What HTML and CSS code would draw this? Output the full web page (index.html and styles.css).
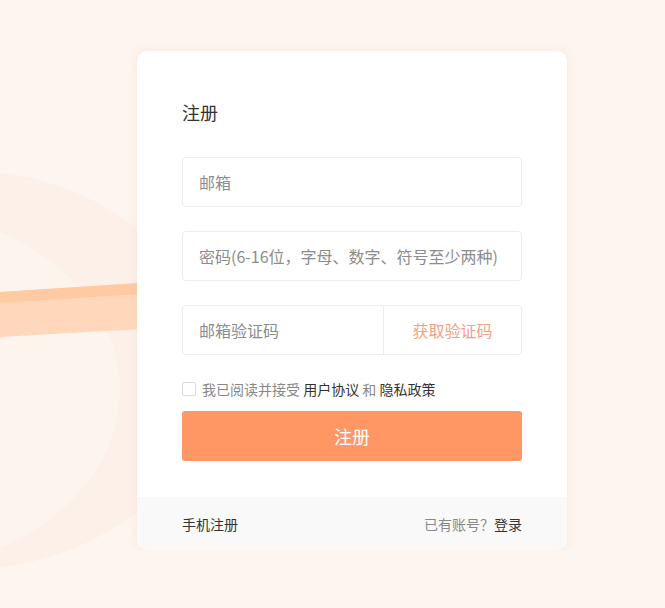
FILE: index.html
```html
<!DOCTYPE html>
<html lang="zh-CN">

<head>
    <meta charset="UTF-8">
    <title>注册</title>
    <meta name="viewport" content="width=device-width, initial-scale=1.0">
    <link rel="stylesheet" href="styles.css">
</head>

<body>

    <!-- 背景装饰 -->
    <svg class="bg-deco" width="665" height="608" viewBox="0 0 665 608">
        <ellipse cx="-40" cy="370" rx="250" ry="200" fill="#fcece1" opacity="0.5"></ellipse>
        <ellipse cx="-110" cy="390" rx="230" ry="180" fill="#fdf4ee"></ellipse>
        <polygon points="0,292 140,283 140,329 0,337" fill="#ffd7ba"></polygon>
        <polygon points="0,292 140,283 140,294 0,303" fill="#ffc9a2"></polygon>
    </svg>

    <div class="page">
        <div class="card">
            <div class="card-body">
                <h2 class="title">注册</h2>

                <div class="field">
                    <input type="text" placeholder="邮箱">
                </div>

                <div class="field">
                    <input type="password" placeholder="密码(6-16位，字母、数字、符号至少两种)">
                </div>

                <div class="field field-code">
                    <input type="text" placeholder="邮箱验证码">
                    <button class="code-btn">获取验证码</button>
                </div>

                <label class="agree">
                    <span class="check"></span>
                    <span>我已阅读并接受 <a href="#">用户协议</a> 和 <a href="#">隐私政策</a></span>
                </label>

                <button class="submit">注册</button>
            </div>

            <div class="card-foot">
                <a href="#">手机注册</a>
                <span class="muted">已有账号？<a href="#">登录</a></span>
            </div>
        </div>
    </div>

</body>

</html>
```

FILE: styles.css
```css
body {
    font-family: "Noto Sans CJK SC", "Noto Sans", sans-serif;
    background-color: #fdf5ef;
    color: #333;
    margin: 0;
    padding: 0;
    overflow: hidden;
}

.bg-deco {
    position: absolute;
    left: 0;
    top: 0;
    z-index: 0;
}

.page {
    position: relative;
    z-index: 1;
    padding: 51px 0 0 137px;
}

.card {
    width: 430px;
    background-color: #fff;
    border-radius: 10px;
    box-shadow: 0 0 8px rgba(235, 205, 185, 0.35);
    overflow: hidden;
}

.card-body {
    padding: 48px 45px 36px;
}

.title {
    margin: 0 0 32px;
    font-size: 18px;
    font-weight: normal;
    line-height: 26px;
    color: #333;
}

.field {
    display: flex;
    height: 50px;
    box-sizing: border-box;
    border: 1px solid #ececec;
    border-radius: 4px;
    margin-bottom: 24px;
}

.field input {
    flex: 1;
    min-width: 0;
    border: none;
    outline: none;
    background: transparent;
    padding: 0 16px;
    font-family: inherit;
    font-size: 16px;
    color: #333;
}

.field input::placeholder {
    color: #8c8c8c;
}

.code-btn {
    width: 138px;
    border: none;
    border-left: 1px solid #ececec;
    background: transparent;
    font-family: inherit;
    font-size: 16px;
    color: #f4a083;
    cursor: pointer;
    padding: 0;
}

.agree {
    display: flex;
    align-items: center;
    gap: 6px;
    height: 20px;
    font-size: 14px;
    color: #888;
    cursor: pointer;
}

.agree a {
    color: #333;
    text-decoration: none;
}

.check {
    width: 12px;
    height: 12px;
    border: 1px solid #dcdcdc;
    border-radius: 2px;
    background: #fff;
}

.submit {
    display: block;
    width: 100%;
    height: 50px;
    margin-top: 12px;
    border: none;
    border-radius: 3px;
    background-color: #ff9765;
    color: #fff;
    font-family: inherit;
    font-size: 18px;
    cursor: pointer;
}

.card-foot {
    display: flex;
    justify-content: space-between;
    align-items: center;
    height: 53px;
    padding: 0 45px;
    background-color: #f9f9f9;
    font-size: 14px;
}

.card-foot a {
    color: #333;
    text-decoration: none;
}

.muted {
    color: #888;
}
```
